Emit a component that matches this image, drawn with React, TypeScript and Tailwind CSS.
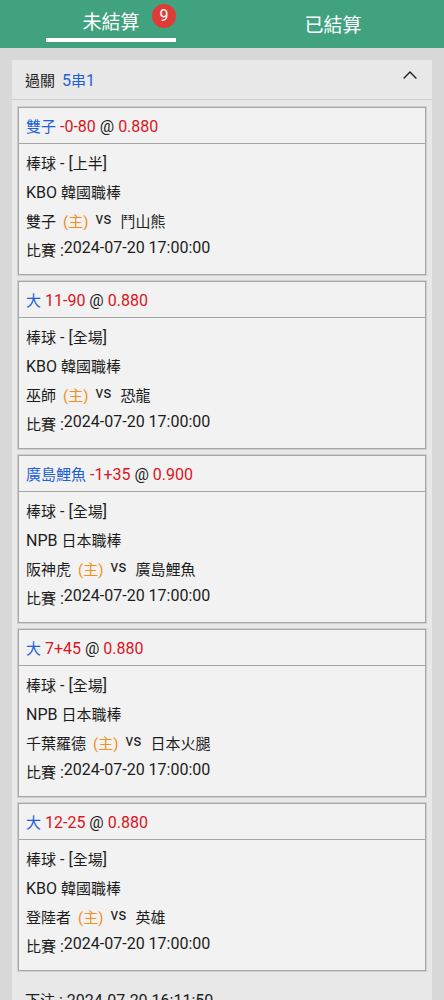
import { useState, type ReactNode } from "react";

type Leg = {
  pick: string;
  line: string;
  odds: string;
  period: string;
  leagueCode: string;
  league: string;
  home: string;
  away: string;
  time: string;
};

const legs: Leg[] = [
  { pick: "雙子", line: "-0-80", odds: "0.880", period: "上半", leagueCode: "KBO", league: "韓國職棒", home: "雙子", away: "鬥山熊", time: "2024-07-20 17:00:00" },
  { pick: "大", line: "11-90", odds: "0.880", period: "全場", leagueCode: "KBO", league: "韓國職棒", home: "巫師", away: "恐龍", time: "2024-07-20 17:00:00" },
  { pick: "廣島鯉魚", line: "-1+35", odds: "0.900", period: "全場", leagueCode: "NPB", league: "日本職棒", home: "阪神虎", away: "廣島鯉魚", time: "2024-07-20 17:00:00" },
  { pick: "大", line: "7+45", odds: "0.880", period: "全場", leagueCode: "NPB", league: "日本職棒", home: "千葉羅德", away: "日本火腿", time: "2024-07-20 17:00:00" },
  { pick: "大", line: "12-25", odds: "0.880", period: "全場", leagueCode: "KBO", league: "韓國職棒", home: "登陸者", away: "英雄", time: "2024-07-20 17:00:00" },
];

function Han({ children }: { children: ReactNode }) {
  return <span className="text-[15px]">{children}</span>;
}

function LegCard({ leg }: { leg: Leg }) {
  return (
    <li className="border border-[#a6a6a6] bg-[#f2f2f2] outline-1 outline-[#cfcfcf]">
      <h2 className="h-9 border-b border-[#a6a6a6] px-[7px] leading-[38px]">
        <span className="text-[#1f60d6]"><Han>{leg.pick}</Han></span>{" "}
        <span className="text-[#dc141c]">{leg.line}</span> @{" "}
        <span className="text-[#dc141c]">{leg.odds}</span>
      </h2>
      <div className="grid auto-rows-[29px] px-[7px] pt-[5px] pb-[9px] leading-[29px]">
        <p><Han>棒球</Han> - [<Han>{leg.period}</Han>]</p>
        <p>{leg.leagueCode} <Han>{leg.league}</Han></p>
        <p className="flex text-[15px] leading-[31px]">
          <span>{leg.home}</span>
          <span className="ml-[7px] text-[#f0901e]">(主)</span>
          <span className="ml-[7px] text-base leading-6">vs</span>
          <span className="ml-[9px]">{leg.away}</span>
        </p>
        <p className="flex">
          <span><Han>比賽</Han> :</span>
          <time className="leading-6">{leg.time}</time>
        </p>
      </div>
    </li>
  );
}

export default function App() {
  const [open, setOpen] = useState(true);
  return (
    <div className="flex h-screen flex-col bg-[#d8d8d8] font-['Roboto','Noto_Sans_CJK_TC',sans-serif] text-base text-[#1c1c1c]">
      <nav className="grid h-12 shrink-0 grid-cols-2 bg-[#41a280] text-[19px] text-white">
        <button type="button" className="flex justify-center">
          <span className="relative flex h-[42px] w-[130px] items-center justify-center border-b-4 border-white pt-2">
            未結算
            <span className="absolute top-1 right-0 flex size-6 items-center justify-center rounded-full bg-[#df3c37] text-base leading-none">9</span>
          </span>
        </button>
        <button type="button" className="flex items-center justify-center pt-1">已結算</button>
      </nav>
      <main className="min-h-0 flex-1 overflow-y-auto px-3 pt-3 [scrollbar-width:none]">
        <section className="bg-[#e8e8e8]">
          <button
            type="button"
            aria-expanded={open}
            onClick={() => setOpen(!open)}
            className="flex h-10 w-full items-start justify-between border-b border-[#cecece] pr-3 pl-[13px] text-left leading-[41px]"
          >
            <span>
              <Han>過關</Han>
              <span className="ml-[7px] text-[#1f60d6]">5<Han>串</Han>1</span>
            </span>
            <svg viewBox="0 0 14 8" className="mt-[11px] mr-[3px] h-2 w-3.5 fill-none stroke-[#222] stroke-[1.4]" aria-hidden="true">
              <path d="M.6 7.4 7 1l6.4 6.4" />
            </svg>
          </button>
          {open && (
            <>
              <ul className="flex flex-col gap-1.5 px-1.5 pt-[7px]">
                {legs.map((leg, i) => (
                  <LegCard key={i} leg={leg} />
                ))}
              </ul>
              <p className="px-[13px] pt-4 pb-3 leading-7"><Han>下注</Han> : <time>2024-07-20 16:11:50</time></p>
            </>
          )}
        </section>
      </main>
    </div>
  );
}
